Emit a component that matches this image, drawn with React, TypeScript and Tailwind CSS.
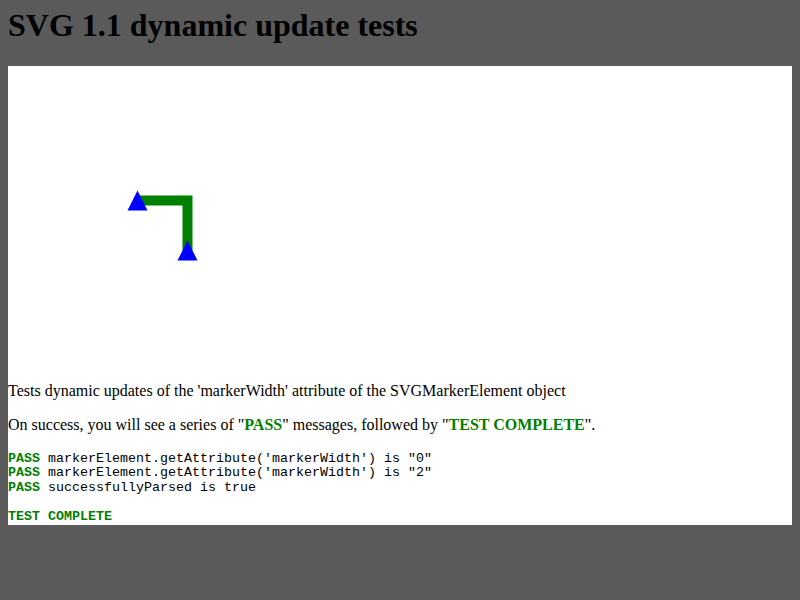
import React from "react";

export default function App() {
  const mono = { fontFamily: '"Liberation Mono", "DejaVu Sans Mono", monospace' };
  return (
    <div className="min-h-[600px] w-[800px] bg-[#5a5a5a] px-2 pt-[7px] text-black" style={{ fontFamily: '"Liberation Serif", "Times New Roman", serif' }}>
      <h1 className="m-0 mb-[22px] text-[32px] font-bold leading-[37px]">SVG 1.1 dynamic update tests</h1>
      <div className="bg-white">
        <svg width="784" height="300" className="block" viewBox="0 0 784 300">
          <path d="M129.5 134.5 H179.5 V184.5" fill="none" stroke="#008000" strokeWidth="10" />
          <polygon points="129.5,124.5 139.5,144.5 119.5,144.5" fill="#0000ff" />
          <polygon points="179.5,174.5 189.5,194.5 169.5,194.5" fill="#0000ff" />
        </svg>
        <p className="mt-4 text-[16px] leading-[18.4px]">Tests dynamic updates of the 'markerWidth' attribute of the SVGMarkerElement object</p>
        <p className="mt-4 text-[16px] leading-[18.4px]">
          On success, you will see a series of "<span className="font-bold text-[#008000]">PASS</span>" messages, followed by "<span className="font-bold text-[#008000]">TEST COMPLETE</span>".
        </p>
        <div className="mt-[17px] text-[13.33px] leading-[14.6px] whitespace-pre" style={mono}>
          <div><span className="font-bold text-[#008000]">PASS</span> markerElement.getAttribute('markerWidth') is "0"</div>
          <div><span className="font-bold text-[#008000]">PASS</span> markerElement.getAttribute('markerWidth') is "2"</div>
          <div><span className="font-bold text-[#008000]">PASS</span> successfullyParsed is true</div>
          <div>&nbsp;</div>
          <div className="font-bold text-[#008000]">TEST COMPLETE</div>
        </div>
      </div>
    </div>
  );
}
